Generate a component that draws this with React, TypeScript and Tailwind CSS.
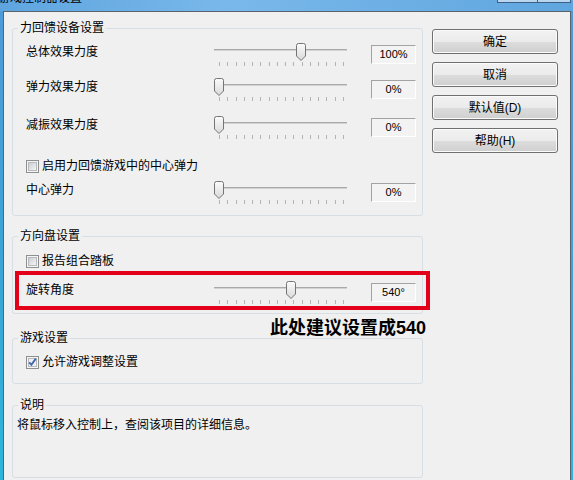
import type { ReactNode } from 'react';

const TICKS = Array.from({ length: 16 }, (_, i) => Math.round(10 + (i * 124) / 15));

function Slider({ thumb }: { thumb: number }) {
  return (
    <svg width="143" height="26" className="block shrink-0">
      <defs>
        <linearGradient id="thumbFill" x1="0" y1="0" x2="0" y2="1">
          <stop offset="0" stopColor="#fbfbfb" />
          <stop offset="1" stopColor="#d9d9d9" />
        </linearGradient>
      </defs>
      <rect x="5" y="6" width="133" height="2" fill="#d2d2d2" />
      <rect x="5" y="6" width="133" height="1" fill="#a9a9a9" />
      {TICKS.map((x) => (
        <rect key={x} x={x} y="19" width="1" height="4" fill="#b3b3b3" />
      ))}
      <path
        transform={`translate(${thumb - 5},0)`}
        d="M0.5 2.5 Q0.5 0.5 2.5 0.5 H7.5 Q9.5 0.5 9.5 2.5 V13 L5 17.5 L0.5 13 Z"
        fill="url(#thumbFill)"
        stroke="#747474"
      />
    </svg>
  );
}

function ValueBox({ value }: { value: string }) {
  return (
    <div className="mt-[2px] ml-[19px] flex h-[19px] w-[45px] shrink-0 items-center justify-center border border-t-[#a3a3a3] border-r-white border-b-white border-l-[#a3a3a3] bg-[#f3f3f3] text-[11px]">
      {value}
    </div>
  );
}

function SliderRow({
  label,
  thumb,
  value,
  className,
}: {
  label: string;
  thumb: number;
  value: string;
  className: string;
}) {
  return (
    <div className={`flex items-start ${className}`}>
      <div className="mt-[1px] w-[183px] shrink-0 leading-[16px]">{label}</div>
      <Slider thumb={thumb} />
      <ValueBox value={value} />
    </div>
  );
}

function CheckBox({ checked }: { checked?: boolean }) {
  return (
    <svg width="13" height="13" className="block shrink-0">
      <defs>
        <linearGradient id="cbFill" x1="0" y1="0" x2="1" y2="1">
          <stop offset="0" stopColor="#c9ccd1" />
          <stop offset="1" stopColor="#f7f7f7" />
        </linearGradient>
      </defs>
      <rect x="0.5" y="0.5" width="12" height="12" fill="#f5f5f5" stroke="#8e8f8f" />
      <rect x="2.5" y="2.5" width="8" height="8" fill={checked ? '#eef2f8' : 'url(#cbFill)'} stroke="#b6b9bd" />
      {checked && (
        <path d="M3.2 6.3 L5.4 8.8 L9.8 2.6" stroke="#4468a8" strokeWidth="1.9" fill="none" />
      )}
    </svg>
  );
}

function CheckRow({ label, checked, className }: { label: string; checked?: boolean; className: string }) {
  return (
    <div className={`flex h-[16px] items-center pl-[13px] ${className}`}>
      <CheckBox checked={checked} />
      <span className="ml-[3px] leading-[16px]">{label}</span>
    </div>
  );
}

function Group({ title, className, children }: { title: string; className: string; children: ReactNode }) {
  return (
    <fieldset className={`w-[411px] min-w-0 rounded-[3px] border border-[#d5dfe5] ${className}`}>
      <legend className="ml-[5px] px-[2px] leading-[16px]">{title}</legend>
      {children}
    </fieldset>
  );
}

function DialogButton({ children }: { children: ReactNode }) {
  return (
    <button
      type="button"
      className="flex h-[25px] w-[126px] items-center justify-center rounded-[3px] border border-[#707070] bg-[linear-gradient(#f2f2f2_0%,#ebebeb_50%,#dddddd_51%,#cfcfcf_100%)] text-[12px] text-black shadow-[inset_0_0_0_1px_#fbfbfb]"
    >
      {children}
    </button>
  );
}

export default function App() {
  return (
    <div className="h-[480px] w-[573px] overflow-hidden bg-[linear-gradient(#4e9ad8,#3aa6d6_60%,#2cb6db)] font-['Liberation_Sans','Noto_Sans_CJK_SC',sans-serif] text-[12px] text-black">
      <div className="flex h-[11px] bg-[linear-gradient(90deg,#5ea5df,#79b8ea_40%,#5fa6df)]">
        <span className="-mt-[10px] -ml-[2px] leading-[16px]">游戏控制器设置</span>
        <div className="mr-[2px] ml-auto flex h-[3px] w-[74px] border-x border-b border-[#3d5f86] bg-[#b9d6f1]">
          <div className="w-[40px] border-r border-[#3d5f86]" />
        </div>
      </div>

      <div className="ml-[3px] flex h-[469px] w-[568px] border-x border-t border-[#58636e] bg-[#f0f0f0]">
        <div className="flex w-[419px] shrink-0 flex-col pt-[8px] pl-[8px]">
          <Group title="力回馈设备设置" className="pb-[8px]">
            <SliderRow label="总体效果力度" thumb={92} value="100%" className="mt-[7px] pl-[13px]" />
            <SliderRow label="弹力效果力度" thumb={10} value="0%" className="mt-[9px] pl-[13px]" />
            <SliderRow label="减振效果力度" thumb={10} value="0%" className="mt-[12px] pl-[13px]" />
            <CheckRow label="启用力回馈游戏中的中心弹力" className="mt-[16px]" />
            <SliderRow label="中心弹力" thumb={10} value="0%" className="mt-[7px] pl-[13px]" />
          </Group>

          <Group title="方向盘设置" className="mt-[12px] pb-[3px]">
            <CheckRow label="报告组合踏板" className="mt-[9px]" />
            <div className="mt-[2px] ml-[2px] h-[39px] w-[415px] border-4 border-[#e3001b]">
              <SliderRow label="旋转角度" thumb={82} value="540°" className="mt-[6px] pl-[7px]" />
            </div>
          </Group>

          <div className="flex h-[16px] justify-end">
            <span className="-mr-[3px] mt-[2px] text-[18px] leading-[24px] font-bold whitespace-nowrap">此处建议设置成540</span>
          </div>

          <Group title="游戏设置" className="pb-[13px]">
            <CheckRow label="允许游戏调整设置" checked className="mt-[8px]" />
          </Group>

          <Group title="说明" className="mt-[13px] pb-[44px]">
            <div className="mt-[4px] pl-[4px] leading-[16px]">将鼠标移入控制上，查阅该项目的详细信息。</div>
          </Group>
        </div>

        <div className="ml-[9px] flex flex-col gap-[8px] pt-[17px]">
          <DialogButton>确定</DialogButton>
          <DialogButton>取消</DialogButton>
          <DialogButton>默认值(D)</DialogButton>
          <DialogButton>帮助(H)</DialogButton>
        </div>
      </div>
    </div>
  );
}
